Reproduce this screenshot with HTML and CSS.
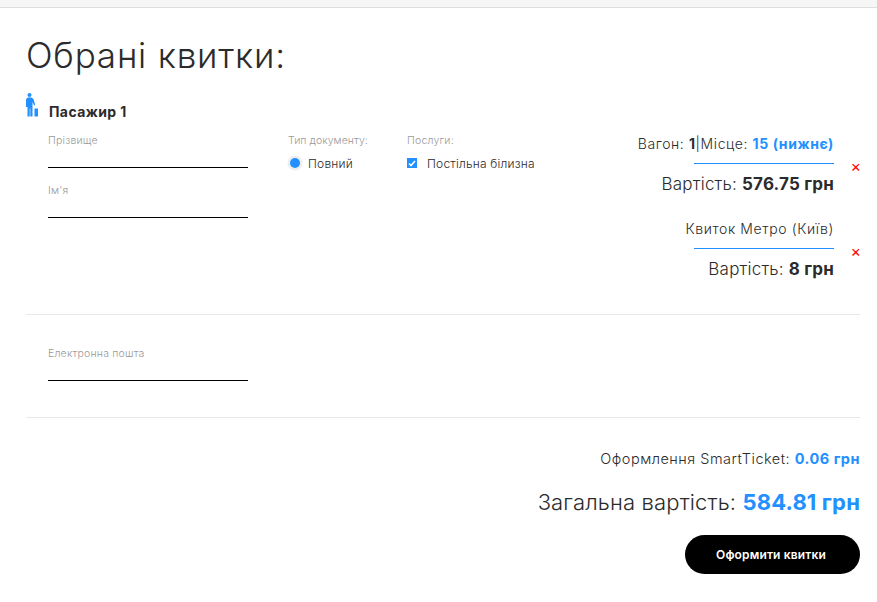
FILE: index.html
```html
<!DOCTYPE html>
<html lang="uk">
<head>
    <meta charset="UTF-8">
    <title>Обрані квитки</title>
    <link rel="stylesheet" href="styles.css">
</head>
<body>
    <div class="top-bar"></div>
    <div class="container">
        <h1>Обрані квитки:</h1>

        <div class="passenger-head">
            <svg class="passenger-icon" width="12" height="24" viewBox="0 0 12 24">
                <circle cx="3.5" cy="2" r="2"/>
                <path d="M1.5 4.5h4l2 1.5 1.7 6-1 .4L6.5 9v14.500H4.300V15.500h-.6V23.500H1.500V14H0V6.500z"/>
                <path d="M8.500 15.500h3.500v8H8.500z"/>
            </svg>
            <h2>Пасажир 1</h2>
        </div>

        <div class="passenger-row">
            <div class="names">
                <div class="field">
                    <label>Прізвище</label>
                    <div class="line"></div>
                </div>
                <div class="field">
                    <label>Ім'я</label>
                    <div class="line"></div>
                </div>
            </div>
            <div class="doc-type">
                <label>Тип документу:</label>
                <div class="option">
                    <span class="radio"></span>
                    <span>Повний</span>
                </div>
            </div>
            <div class="services">
                <label>Послуги:</label>
                <div class="option">
                    <span class="checkbox">
                        <svg width="8" height="7" viewBox="0 0 8 7"><path d="M1 3.500l2 2L7 1" fill="none" stroke="#fff" stroke-width="1.600"/></svg>
                    </span>
                    <span>Постільна білизна</span>
                </div>
            </div>
            <div class="tickets">
                <div class="ticket">
                    <div class="ticket-title">Вагон: <b>1</b>|Місце: <b class="blue">15 (нижнє)</b></div>
                    <div class="ticket-line"><span class="remove">×</span></div>
                    <div class="ticket-price">Вартість: <b>576.75 грн</b></div>
                </div>
                <div class="ticket">
                    <div class="ticket-title">Квиток Метро (Київ)</div>
                    <div class="ticket-line"><span class="remove">×</span></div>
                    <div class="ticket-price">Вартість: <b>8 грн</b></div>
                </div>
            </div>
        </div>

        <div class="email-row">
            <div class="field">
                <label>Електронна пошта</label>
                <div class="line"></div>
            </div>
        </div>

        <div class="summary">
            <div class="fee">Оформлення SmartTicket: <b class="blue">0.06 грн</b></div>
            <div class="total">Загальна вартість: <b class="blue">584.81 грн</b></div>
            <button class="submit">Оформити квитки</button>
        </div>
    </div>
</body>
</html>
```

FILE: styles.css
```css
body {
    font-family: 'Inter', 'Liberation Sans', sans-serif;
    margin: 0;
    padding: 0;
    background: #fff;
    color: #2b2b2b;
    font-weight: 300;
}
.top-bar {
    height: 7px;
    background: #f6f6f6;
    border-bottom: 1px solid #ddd;
}
.container {
    padding: 0 17px 0 26px;
}
h1 {
    font-size: 35px;
    line-height: 42px;
    font-weight: 300;
    letter-spacing: 0.8px;
    margin: 0;
    padding-top: 26px;
}
.blue {
    color: #2290ff;
}
b {
    font-weight: 700;
}
.passenger-head {
    display: flex;
    align-items: flex-start;
    gap: 11px;
    padding-top: 17px;
}
.passenger-icon {
    fill: #2290ff;
}
h2 {
    font-size: 14px;
    line-height: 18px;
    font-weight: 700;
    letter-spacing: 0.4px;
    margin: 10px 0 0;
}
.passenger-row {
    display: flex;
    padding-left: 22px;
    border-bottom: 1px solid #e8e8e8;
    height: 193px;
}
label {
    display: block;
    font-size: 10.500px;
    line-height: 14px;
    letter-spacing: 0.2px;
    color: #999;
}
.names {
    width: 200px;
    padding-top: 13px;
}
.field {
    width: 200px;
    height: 50px;
}
.line {
    border-bottom: 1px solid #000;
    height: 19px;
}
.doc-type {
    width: 119px;
    margin-left: 40px;
    padding-top: 13px;
}
.doc-type label {
    letter-spacing: 0.05px;
}
.services {
    width: 150px;
    padding-top: 13px;
}
.option {
    display: flex;
    align-items: center;
    font-size: 12px;
    letter-spacing: 0.2px;
    height: 16px;
    margin-top: 7px;
}
.radio {
    width: 10px;
    height: 10px;
    border-radius: 50%;
    background: #2290ff;
    box-shadow: 0 0 0 2.500px #eee;
    margin: 0 8px 0 2px;
}
.checkbox {
    width: 10px;
    height: 10px;
    background: #2290ff;
    display: flex;
    align-items: center;
    justify-content: center;
    margin-right: 10px;
}
.tickets {
    flex: 1;
    padding-top: 12px;
}
.ticket {
    text-align: right;
    padding-right: 26px;
    height: 85px;
}
.ticket-title {
    font-size: 14px;
    line-height: 22px;
    letter-spacing: 0.6px;
}
.ticket-line {
    width: 140px;
    margin: 8px 0 0 auto;
    border-top: 1px solid #2290ff;
    position: relative;
    height: 0;
}
.remove {
    position: absolute;
    right: -27px;
    top: -6px;
    color: #f00;
    font-size: 16px;
    line-height: 16px;
    font-weight: 400;
}
.ticket-price {
    font-size: 17px;
    line-height: 24px;
    letter-spacing: 0.2px;
    margin-top: 8px;
}
.email-row {
    padding: 32px 0 0 22px;
    height: 70px;
    border-bottom: 1px solid #e8e8e8;
}
.summary {
    text-align: right;
    padding-top: 32px;
}
.fee {
    font-size: 14.500px;
    line-height: 18px;
    letter-spacing: 0.5px;
}
.total {
    font-size: 22px;
    line-height: 26px;
    letter-spacing: 0.15px;
    margin-top: 21px;
}
.submit {
    display: block;
    margin: 20px 0 0 auto;
    width: 175px;
    height: 39px;
    border: 0;
    border-radius: 20px;
    background: #000;
    color: #fff;
    font-family: inherit;
    font-size: 12px;
    font-weight: 600;
    letter-spacing: 0.15px;
    padding: 0 3px 0 0;
}
```
